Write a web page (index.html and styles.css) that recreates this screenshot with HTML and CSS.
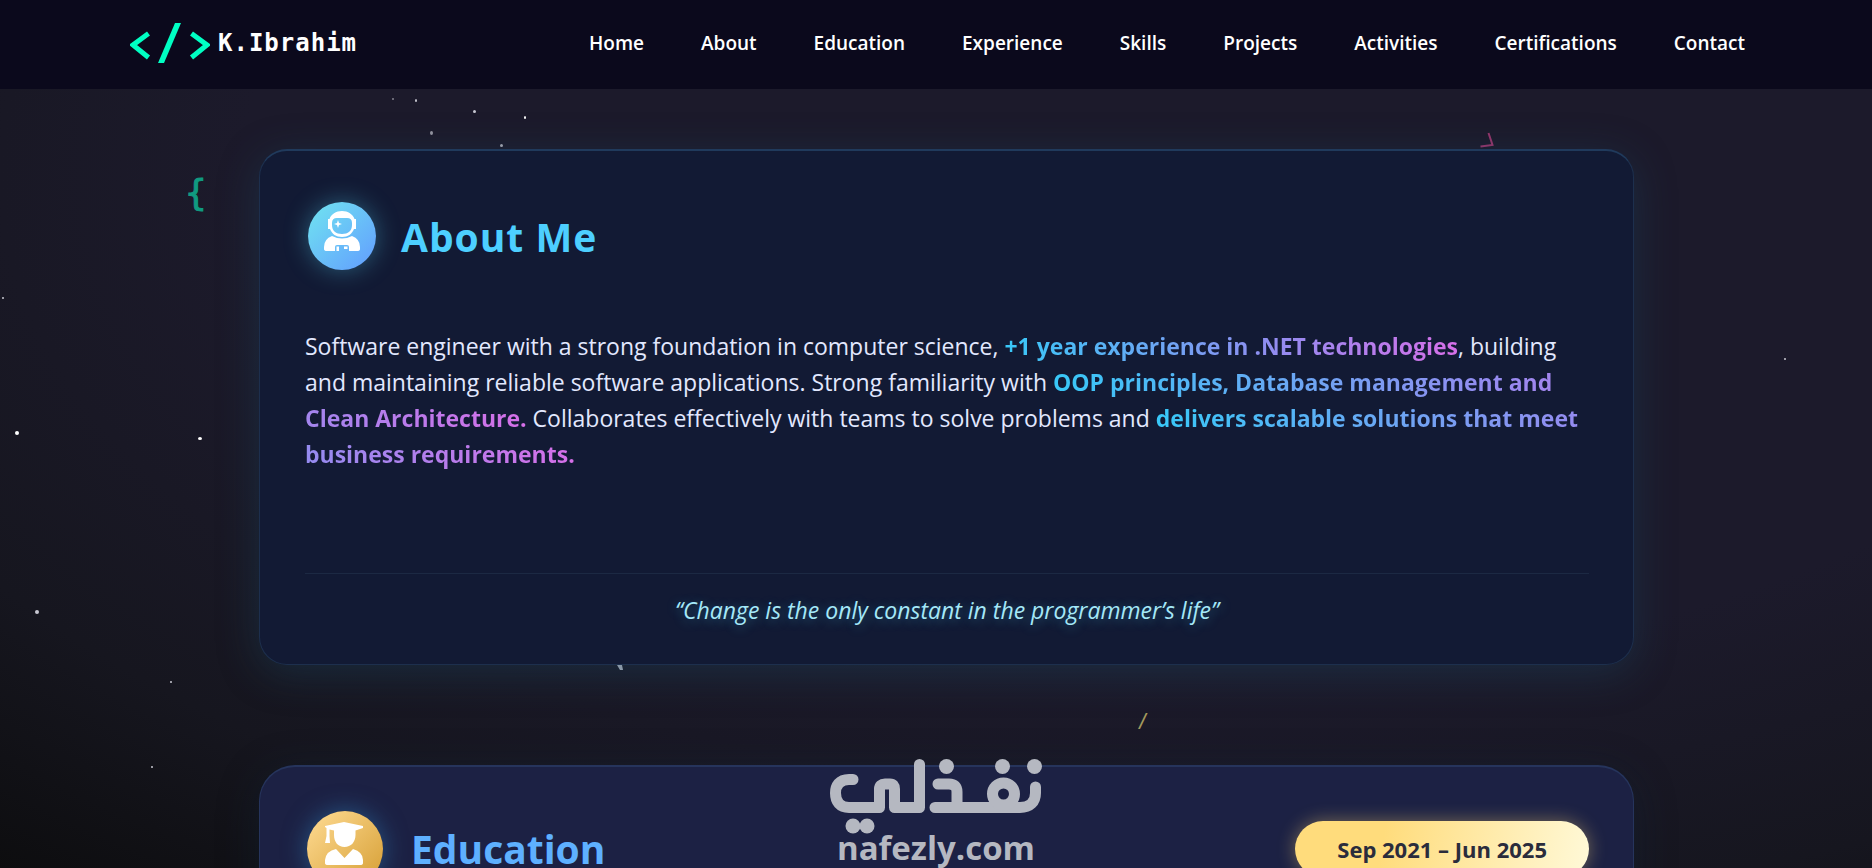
FILE: index.html
```html
<!DOCTYPE html>
<html lang="en">
<head>
  <meta charset="UTF-8">
  <meta name="viewport" content="width=device-width, initial-scale=1.0">
  <title>K.Ibrahim</title>
  <link rel="stylesheet" href="styles.css">
</head>
<body>
  <!-- Stars and floating symbols -->
  <div class="sky" aria-hidden="true">
    <span class="star s1"></span>
    <span class="star s2"></span>
    <span class="star s3"></span>
    <span class="star s4"></span>
    <span class="star s5"></span>
    <span class="star s6"></span>
    <span class="star s7"></span>
    <span class="star s8"></span>
    <span class="star s9"></span>
    <span class="star s10"></span>
    <span class="star s11"></span>
    <span class="star s12"></span>
    <span class="star s13"></span>
    <span class="symbol brace">{</span>
    <span class="symbol slash">/</span>
    <svg class="symbol angle" viewBox="0 0 16 16"><path d="M8.500 1L12.500 13L0.500 14.500" /></svg>
    <svg class="symbol tail" viewBox="0 0 6 5"><path d="M0 0H5L6 5H3Z" /></svg>
  </div>

  <header class="navbar">
    <a class="logo" href="#home">
      <svg class="logo-icon" viewBox="0 0 80 40">
        <path d="M18.500 10.500L3 22L18.500 34.500" />
        <path d="M61.500 10.500L77 22L61.500 34.500" />
        <path class="logo-slash" d="M45 0H51L34 40H28Z" />
      </svg>
      <span>K.Ibrahim</span>
    </a>
    <nav class="nav-links">
      <a href="#home">Home</a>
      <a href="#about">About</a>
      <a href="#education">Education</a>
      <a href="#experience">Experience</a>
      <a href="#skills">Skills</a>
      <a href="#projects">Projects</a>
      <a href="#activities">Activities</a>
      <a href="#certifications">Certifications</a>
      <a href="#contact">Contact</a>
    </nav>
  </header>

  <main class="content">
    <section class="card about" id="about">
      <div class="card-header">
        <span class="icon icon-about">
          <svg viewBox="0 0 36 42">
            <path fill-rule="evenodd" d="M18 0C24 0 29 3.500 30.500 8H32V18H30C28 23 24 26 18 26S8 23 6 18H4V8H5.500C7 3.500 12 0 18 0ZM13 7Q8 7 8 12V14C8 20 12 23 18 23S28 20 28 14V12Q28 7 23 7Z" />
            <path d="M14 9L15 12L18 13L15 14L14 17L13 14L10 13L13 12Z" />
            <path fill-rule="evenodd" d="M8 25Q18 30 28 25Q36 28 36 36V38Q36 40 33 40H25V36Q25 34 23 34H13Q11 34 11 36V40H3Q0 40 0 38V36Q0 28 8 25Z" />
            <path d="M12.500 35.500H15V40H12.500ZM20 35.500H23.500V38H20Z" />
          </svg>
        </span>
        <h2>About Me</h2>
      </div>
      <p class="summary">
        Software engineer with a strong foundation in computer science,
        <strong>+1 year experience in .NET technologies</strong>, building and maintaining reliable
        software applications. Strong familiarity with
        <strong>OOP principles, Database management and Clean Architecture.</strong>
        Collaborates effectively with teams to solve problems and
        <strong>delivers scalable solutions that meet business requirements.</strong>
      </p>
      <p class="quote">“Change is the only constant in the programmer’s life”</p>
    </section>

    <section class="card education" id="education">
      <div class="card-header">
        <span class="icon icon-education">
          <svg viewBox="0 0 40 46">
            <path d="M19 0L38 4V6L30.500 8.500V13C30.500 20 26 25 19.500 25S9 20 9 13V8.500L4.500 7.500V14L5 21H0L1.500 14V6L0 5V4Z" />
            <path d="M11 27L19.500 36L28 27Q38 30 38 38V41Q38 43 35 43H3Q0 43 0 41V38Q1 29 11 27Z" />
          </svg>
        </span>
        <h2>Education</h2>
        <span class="badge">Sep 2021 – Jun 2025</span>
      </div>
    </section>
  </main>

  <!-- Site mark -->
  <div class="mark">
    <svg viewBox="0 0 212 76" role="img" aria-label="نفذلي">
      <g class="mark-lines">
        <path d="M23 20.500H19C9 20.500 5.500 27 5.500 34C5.500 43 10 48.500 19 48.500H49.500V30Q49.500 25 55 25H60Q64.500 25 64.500 30V48.500H89.500V5.500" />
        <path d="M108 25H119Q127 25 127 33V48.500M105 48.500H190C200 48.500 205.500 43 205.500 34V28" />
        <circle cx="173.500" cy="35" r="11" />
      </g>
      <circle cx="116.500" cy="7.500" r="7.500" />
      <circle cx="172.500" cy="7.500" r="7.500" />
      <circle cx="204.500" cy="7.500" r="7.500" />
      <circle cx="23" cy="67" r="7.500" />
      <circle cx="37" cy="67" r="7.500" />
    </svg>
    <span>nafezly.com</span>
  </div>
</body>
</html>
```
FILE: styles.css
```css
* {
  box-sizing: border-box;
  margin: 0;
  padding: 0;
}
html {
  height: 100%;
  overflow: hidden;
}
body {
  height: 100%;
  overflow: hidden;
  font-family: "Open Sans", "Noto Sans", sans-serif;
  color: #e2e8ff;
  background: radial-gradient(ellipse 100% 110% at 65% 20%, #1c1a2b 52%, #16161f 78%, #0c0c0d 100%);
}
a {
  color: #fff;
  text-decoration: none;
}

/* Background */
.sky {
  position: absolute;
  inset: 0;
  overflow: hidden;
}
.star {
  position: absolute;
  width: 2px;
  height: 2px;
  border-radius: 50%;
  background: #c8c8d2;
}
.s1 { left: 392px; top: 98px; opacity: 0.6; }
.s2 { left: 415px; top: 99px; height: 3px; }
.s3 { left: 473px; top: 110px; width: 3px; height: 3px; }
.s4 { left: 524px; top: 116px; height: 3px; background: #fff; }
.s5 { left: 430px; top: 131px; width: 3px; height: 4px; opacity: 0.7; }
.s6 { left: 500px; top: 144px; width: 3px; height: 3px; opacity: 0.8; }
.s7 { left: 2px; top: 297px; }
.s8 { left: 15px; top: 431px; width: 4px; height: 4px; background: #fff; }
.s9 { left: 198px; top: 437px; width: 4px; height: 3px; background: #fff; }
.s10 { left: 35px; top: 610px; width: 4px; height: 4px; }
.s11 { left: 170px; top: 681px; }
.s12 { left: 151px; top: 766px; }
.s13 { left: 1784px; top: 358px; }
.symbol {
  position: absolute;
  font-family: "DejaVu Sans Mono", monospace;
}
.brace {
  left: 185px;
  top: 172px;
  font-size: 36px;
  line-height: 42px;
  color: #109b80;
  -webkit-text-stroke: 1px #109b80;
}
.slash {
  left: 1137px;
  top: 708px;
  font-size: 20px;
  line-height: 24px;
  color: #a39a5d;
}
.angle {
  left: 1480px;
  top: 132px;
  width: 16px;
  height: 16px;
  fill: none;
  stroke: #96366b;
  stroke-width: 2;
}
.tail {
  left: 617px;
  top: 665px;
  width: 6px;
  height: 5px;
  fill: #a7acb8;
}

/* Navbar */
.navbar {
  position: relative;
  display: flex;
  justify-content: space-between;
  align-items: center;
  height: 89px;
  padding: 0 127px 4px 130px;
  background: #0b091c;
}
.logo {
  display: flex;
  align-items: center;
  gap: 8px;
  font-family: "DejaVu Sans Mono", monospace;
  font-size: 24px;
  font-weight: bold;
  letter-spacing: 1px;
}
.logo-icon {
  width: 80px;
  height: 40px;
  fill: none;
  stroke: #00ffc3;
  stroke-width: 5;
}
.logo-icon .logo-slash {
  fill: #00ffc3;
  stroke: none;
}
.nav-links {
  display: flex;
  gap: 57px;
  font-size: 19px;
  font-weight: 600;
}

/* Cards */
.content {
  position: relative;
  padding: 60px 238px 0 259px;
}
.card {
  border: 1px solid #1d2f4d;
  border-top: 2px solid #203a5c;
  padding: 0 44px 0 45px;
}
.card-header {
  display: flex;
  align-items: center;
}
.card-header h2 {
  font-size: 39px;
  line-height: 56px;
  font-weight: bold;
}
.about {
  border-radius: 28px;
  padding-top: 51px;
  background: #121a34;
  box-shadow: 0 8px 40px rgba(30, 80, 110, 0.35);
}
.icon {
  display: flex;
  justify-content: center;
  border-radius: 50%;
}
.icon svg {
  fill: #fff;
}
.icon-about {
  width: 68px;
  height: 68px;
  margin: 0 25px 0 3px;
  padding-top: 9px;
  background: linear-gradient(135deg, #70e5f0, #629cff);
  box-shadow: 0 0 24px rgba(80, 200, 230, 0.4);
}
.icon-about svg {
  width: 36px;
  height: 42px;
}
.about h2 {
  padding-top: 2px;
  letter-spacing: 1px;
  color: #4dcfff;
}
.summary {
  padding: 58px 0 101px;
  font-size: 23px;
  line-height: 36px;
}
.summary strong {
  font-weight: 700;
  color: transparent;
  background: linear-gradient(90deg, #38c8f8, #938cf0 60%, #d66fe8);
  -webkit-background-clip: text;
  background-clip: text;
}
.quote {
  padding: 18px 0 36px;
  border-top: 1px solid #1c2943;
  font-size: 23px;
  line-height: 36px;
  font-style: italic;
  text-align: center;
  color: #a5e8f8;
  text-shadow: 0 2px 12px rgba(70, 200, 240, 0.4);
}
.education {
  margin-top: 100px;
  padding-top: 44px;
  padding-bottom: 44px;
  border-color: #26345c;
  border-bottom: none;
  border-radius: 36px 36px 0 0;
  background: #1c2144;
  box-shadow: 0 8px 40px rgba(16, 40, 60, 0.35);
}
.icon-education {
  width: 76px;
  height: 76px;
  margin: 0 28px 0 2px;
  padding-top: 11px;
  background: linear-gradient(135deg, #ffdc94, #d59d32);
  box-shadow: 0 0 24px rgba(50, 140, 200, 0.5);
}
.icon-education svg {
  width: 40px;
  height: 46px;
}
.education h2 {
  color: #5eb0ff;
}
.badge {
  margin-left: auto;
  padding: 12px 42px;
  border-radius: 28px;
  font-size: 22px;
  line-height: 32px;
  font-weight: bold;
  color: #2a2c3c;
  background: linear-gradient(100deg, #ffdc7c 30%, #fff9d8);
  box-shadow: 0 0 18px rgba(255, 215, 110, 0.4);
}

/* Mark over the page */
.mark {
  position: absolute;
  left: 830px;
  top: 759px;
  display: flex;
  flex-direction: column;
  align-items: center;
  width: 212px;
  color: #b5b8c1;
}
.mark svg {
  width: 212px;
  height: 76px;
  fill: #b5b8c1;
}
.mark-lines {
  fill: none;
  stroke: #b5b8c1;
  stroke-width: 11;
  stroke-linecap: round;
  stroke-linejoin: round;
}
.mark span {
  margin-top: -7px;
  font-size: 33px;
  line-height: 40px;
  font-weight: 700;
}
```
